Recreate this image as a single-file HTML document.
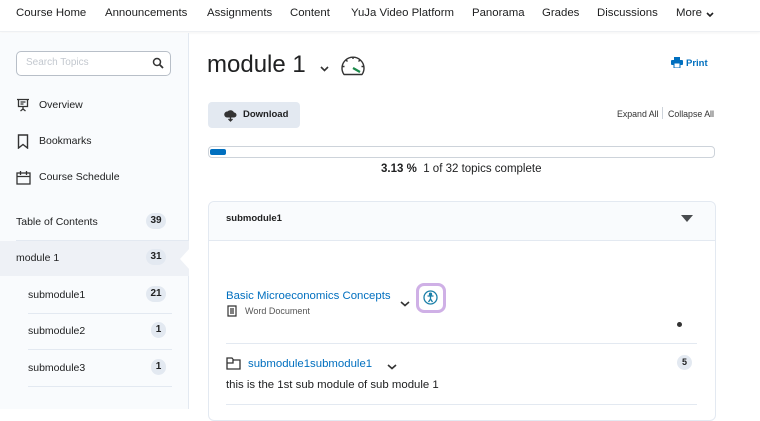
<!DOCTYPE html>
<html><head><meta charset="utf-8"><style>
*{margin:0;padding:0;box-sizing:border-box}
body{width:760px;height:409px;overflow:hidden;background:#fff;font-family:"Liberation Sans",sans-serif;color:#202122;position:relative}
.a{position:absolute;white-space:nowrap}
.nav{font-size:11.4px;top:7px;color:#202122}
.side{position:absolute;left:0;top:33px;width:189px;height:376px;background:#f9fbfd;border-right:1px solid #e3e9f1}
.badge{position:absolute;background:#e3e9f1;border-radius:9px;font-size:10px;font-weight:bold;text-align:center;height:16px;line-height:16px;color:#202122}
.sl{font-size:10.5px;color:#202122}
.hr{position:absolute;height:1px;background:#e3e9f1}
</style></head><body>
<div class="a" style="left:0;top:0;width:760px;height:32px;border-bottom:1px solid #eef0f3;box-shadow:0 1px 3px rgba(0,0,0,.05)"></div>
<div class="a nav" style="left:16px">Course Home</div>
<div class="a nav" style="left:105px">Announcements</div>
<div class="a nav" style="left:207px">Assignments</div>
<div class="a nav" style="left:290px">Content</div>
<div class="a nav" style="left:351px">YuJa Video Platform</div>
<div class="a nav" style="left:472px">Panorama</div>
<div class="a nav" style="left:542px">Grades</div>
<div class="a nav" style="left:597px">Discussions</div>
<div class="a nav" style="left:676px">More</div>
<svg class="a" style="left:706px;top:12px" width="8" height="6"><path d="M1 1l3 3 3-3" stroke="#202122" stroke-width="1.6" fill="none"/></svg>

<div class="side"></div>
<div class="a" style="left:16px;top:51px;width:155px;height:25px;border:1px solid #b8bfc8;border-radius:5px;background:#fff"></div>
<div class="a" style="left:26px;top:57px;font-size:10px;color:#c3c8cf">Search Topics</div>
<svg class="a" style="left:152px;top:57px" width="12" height="12" viewBox="0 0 12 12"><circle cx="5" cy="5" r="3.5" fill="none" stroke="#333" stroke-width="1.5"/><path d="M7.5 7.5L11 11" stroke="#333" stroke-width="1.8"/></svg>

<svg class="a" style="left:16px;top:98px" width="14" height="14" viewBox="0 0 14 14" fill="none" stroke="#333" stroke-width="1.3"><path d="M1 1.5h12M2.5 1.5v7h9v-7M7 8.5v3M4.5 13l2.5-2 2.5 2M4.5 4h5M4.5 6h3"/></svg>
<div class="a sl" style="left:39px;top:99px">Overview</div>
<svg class="a" style="left:17px;top:134px" width="12" height="15" viewBox="0 0 12 15" fill="none" stroke="#333" stroke-width="1.4"><path d="M1.5 1h9v13l-4.5-3.5L1.5 14z"/></svg>
<div class="a sl" style="left:39px;top:135px">Bookmarks</div>
<svg class="a" style="left:16px;top:170px" width="15" height="15" viewBox="0 0 15 15" fill="none" stroke="#333" stroke-width="1.3"><rect x="1" y="3" width="13" height="11"/><path d="M1 6.5h13M4.5 1v4M10.5 1v4"/></svg>
<div class="a sl" style="left:39px;top:171px">Course Schedule</div>

<div class="a sl" style="left:16px;top:216px">Table of Contents</div>
<div class="badge" style="left:146px;top:213px;width:20px">39</div>
<div class="hr" style="left:16px;top:240px;width:173px"></div>
<div class="a" style="left:0;top:241px;width:189px;height:35px;background:#eef1f6"></div>
<svg class="a" style="left:180px;top:248px" width="10" height="22"><path d="M10 0L0 11L10 22z" fill="#fff"/></svg>
<div class="a sl" style="left:16px;top:252px">module 1</div>
<div class="badge" style="left:146px;top:249px;width:20px">31</div>
<div class="a sl" style="left:28px;top:289px">submodule1</div>
<div class="badge" style="left:146px;top:286px;width:20px">21</div>
<div class="hr" style="left:28px;top:313px;width:144px"></div>
<div class="a sl" style="left:28px;top:325px">submodule2</div>
<div class="badge" style="left:151px;top:322px;width:15px">1</div>
<div class="hr" style="left:28px;top:349px;width:144px"></div>
<div class="a sl" style="left:28px;top:362px">submodule3</div>
<div class="badge" style="left:151px;top:359px;width:15px">1</div>
<div class="hr" style="left:28px;top:386px;width:144px"></div>

<div class="a" style="left:207px;top:51px;font-size:24px;color:#202122">module 1</div>
<svg class="a" style="left:320px;top:66px" width="9" height="6"><path d="M1 1l3.5 3.5L8 1" stroke="#333" stroke-width="1.6" fill="none"/></svg>
<svg class="a" style="left:340px;top:54px" width="26" height="22" viewBox="0 0 26 22" fill="none" stroke="#333" stroke-width="1.4"><path d="M4 20.5A11 11 0 1 1 22 20.5z" stroke-linejoin="round"/><path d="M13 14l7 4" stroke="#1c8a4b" stroke-width="2.2"/><path d="M13 3v2M6 6l1.5 1.5M20 6l-1.5 1.5M2.5 12.5h2M21.5 12.5h2"/></svg>
<svg class="a" style="left:671px;top:57px" width="12" height="11" viewBox="0 0 12 11" fill="#006fbf"><rect x="3" y="0" width="6" height="3"/><rect x="0" y="3" width="12" height="5" rx="1"/><rect x="3" y="6" width="6" height="5" fill="#fff" stroke="#006fbf"/></svg>
<div class="a" style="left:686px;top:58px;font-size:9.5px;color:#006fbf;font-weight:bold">Print</div>

<div class="a" style="left:208px;top:102px;width:92px;height:26px;background:#e3e9f1;border-radius:4px"></div>
<svg class="a" style="left:224px;top:109px" width="13" height="13" viewBox="0 0 13 13"><path d="M3 8.5A3 3 0 0 1 3.5 2.5 4 4 0 0 1 10 3.5 2.5 2.5 0 0 1 10 8.5z" fill="#333"/><path d="M6.5 6v6" stroke="#333" stroke-width="1.4"/><path d="M4.5 10l2 2 2-2" stroke="#333" stroke-width="1.3" fill="none"/></svg>
<div class="a" style="left:243px;top:109px;font-size:9.5px;font-weight:bold">Download</div>
<div class="a" style="left:617px;top:109px;font-size:8.8px;color:#333">Expand All</div>
<div class="a" style="left:662px;top:107px;width:1px;height:12px;background:#cdd3da"></div>
<div class="a" style="left:668px;top:109px;font-size:8.8px;color:#333">Collapse All</div>

<div class="a" style="left:208px;top:146px;width:507px;height:12px;border:1px solid #cdd3da;border-radius:4px"></div>
<div class="a" style="left:210px;top:149px;width:16px;height:6px;background:#006fbf;border-radius:2px"></div>
<div class="a" style="left:381px;top:163px;font-size:11.5px"><b>3.13 %</b> &nbsp;1 of 32 topics complete</div>

<div class="a" style="left:208px;top:201px;width:508px;height:220px;border:1px solid #e3e9f1;border-radius:6px;background:#fff"></div>
<div class="a" style="left:209px;top:202px;width:506px;height:39px;background:#f9fbfd;border-bottom:1px solid #e3e9f1;border-radius:6px 6px 0 0"></div>
<div class="a" style="left:226px;top:213px;font-size:9.5px;font-weight:bold">submodule1</div>
<svg class="a" style="left:681px;top:215px" width="12" height="8"><path d="M0 0h12L6 7z" fill="#494c4f"/></svg>

<div class="a" style="left:226px;top:290px;font-size:11.4px;color:#006fbf">Basic Microeconomics Concepts</div>
<svg class="a" style="left:400px;top:301px" width="10" height="6"><path d="M1 1l4 3.5L9 1" stroke="#333" stroke-width="1.6" fill="none"/></svg>
<div class="a" style="left:416px;top:283px;width:30px;height:30px;border:3px solid #cfb0e6;border-radius:8px"></div>
<svg class="a" style="left:423px;top:290px" width="15" height="15" viewBox="0 0 15 15" fill="none" stroke="#1a7fa8" stroke-width="1.3"><circle cx="7.5" cy="7.5" r="6.5"/><circle cx="7.5" cy="4.2" r="1" fill="#1a7fa8"/><path d="M4.5 6h6M7.5 6v3M7.5 9l-2 3M7.5 9l2 3"/></svg>
<svg class="a" style="left:227px;top:305px" width="10" height="12" viewBox="0 0 10 12" fill="none" stroke="#333" stroke-width="1.2"><path d="M1 1h8v10H1z"/><path d="M3 4h4M3 6h4M3 8h4"/></svg>
<div class="a" style="left:245px;top:306px;font-size:9px;color:#555">Word Document</div>
<div class="a" style="left:677px;top:322px;width:5px;height:5px;border-radius:50%;background:#333"></div>
<div class="hr" style="left:226px;top:343px;width:471px"></div>
<svg class="a" style="left:226px;top:357px" width="15" height="13" viewBox="0 0 15 13" fill="none" stroke="#333" stroke-width="1.3"><path d="M1 1h5l1.5 2H14v9H1z"/><path d="M7 3v3H1"/></svg>
<div class="a" style="left:248px;top:358px;font-size:11.4px;color:#006fbf">submodule1submodule1</div>
<svg class="a" style="left:387px;top:364px" width="10" height="6"><path d="M1 1l4 3.5L9 1" stroke="#333" stroke-width="1.6" fill="none"/></svg>
<div class="badge" style="left:677px;top:355px;width:15px;height:15px;line-height:15px;border-radius:50%;font-size:9px">5</div>
<div class="a" style="left:226px;top:379px;font-size:11.4px">this is the 1st sub module of sub module 1</div>
<div class="hr" style="left:226px;top:404px;width:471px"></div>
</body></html>
